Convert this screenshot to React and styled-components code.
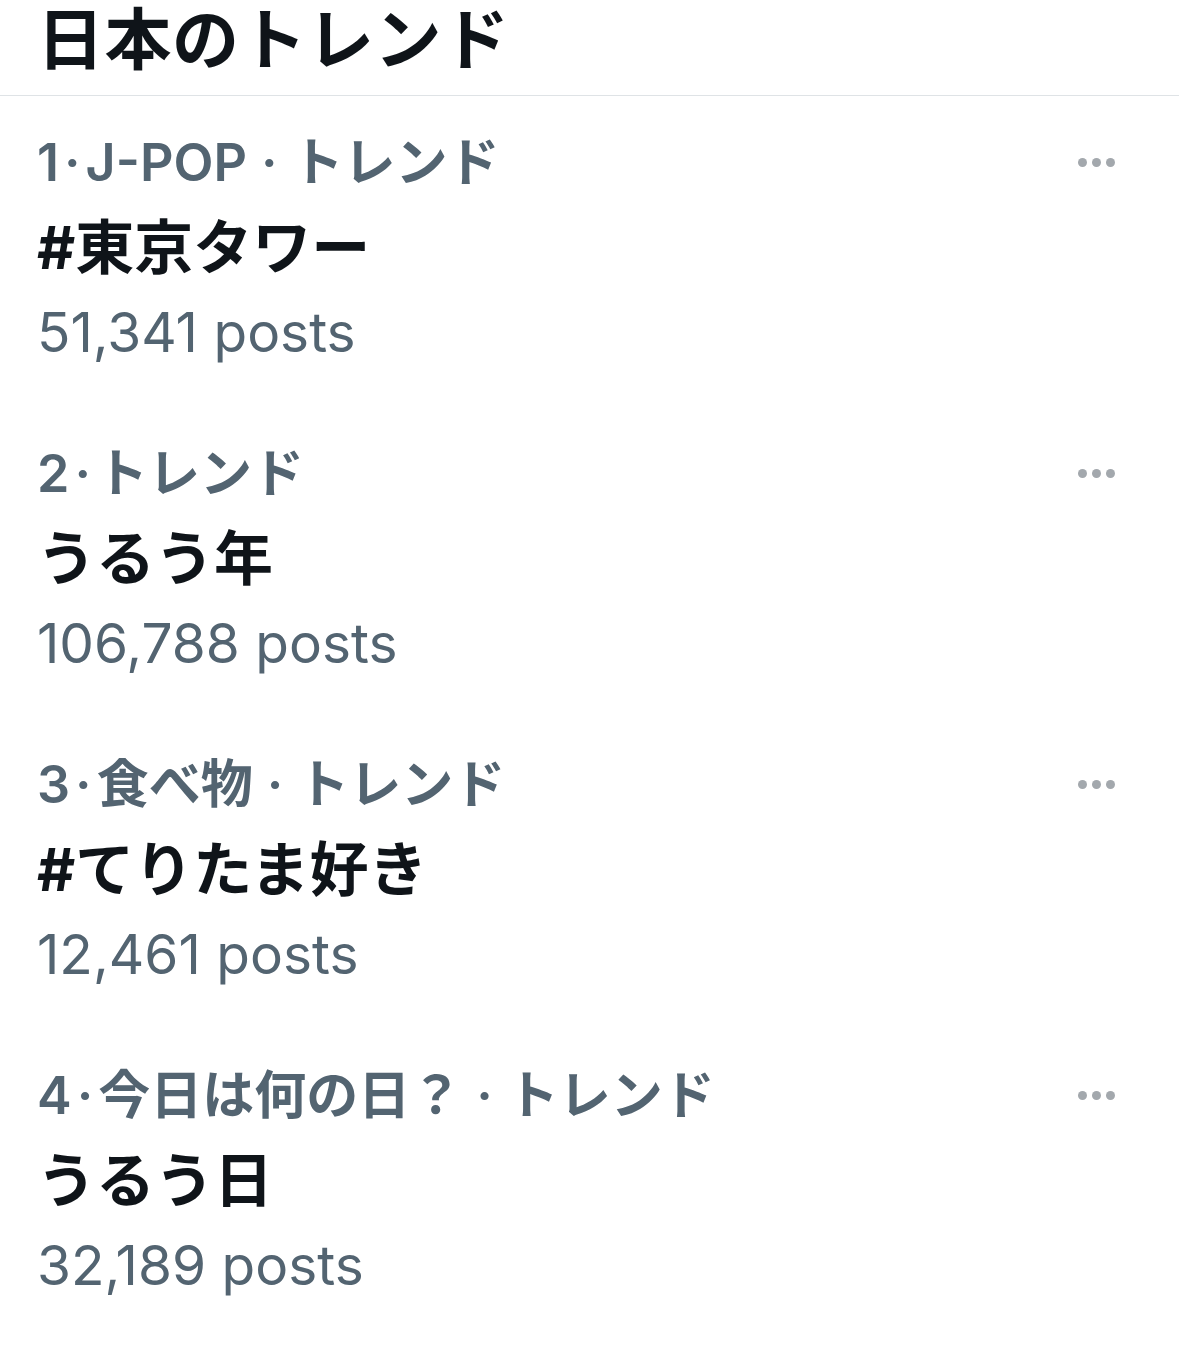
import React from 'react';
import styled, { createGlobalStyle } from 'styled-components';

//  ----------------------------------------------------------------------------
//  Styles
//  ----------------------------------------------------------------------------
const GlobalStyle = createGlobalStyle`
    html, body {
        margin: 0;
        padding: 0;
        background: #ffffff;
    }
    body {
        font-family: Inter, "Noto Sans CJK JP", sans-serif;
        -webkit-font-smoothing: antialiased;
    }
`;

const Page = styled.div`
    width: 1179px;
    min-height: 1360px;
    background: #ffffff;
    overflow: hidden;
`;

const Header = styled.header`
    height: 95px;
    border-bottom: 1px solid #dfe3e6;
    padding-left: 37px;
    display: flex;
    align-items: flex-start;
`;

const Heading = styled.h1`
    margin: 0;
    font-size: 67px;
    font-weight: 700;
    line-height: 80px;
    color: #0f1419;
    letter-spacing: 0.5px;
`;

const List = styled.ul`
    list-style: none;
    margin: 0;
    padding: 0;
`;

const Trend = styled.li`
    display: grid;
    grid-template-columns: 1fr auto;
    padding: 24px 64px 32px 37px;
`;

const Body = styled.div`
    display: flex;
    flex-direction: column;
`;

const Meta = styled.div`
    font-size: 52px;
    font-weight: 600;
    line-height: 85px;
    color: #536471;
    white-space: nowrap;
`;

const Dot = styled.span`
    margin: 0 ${({ $wide }) => ($wide ? '14px' : '5px')};
`;

const Name = styled.div`
    font-size: 59px;
    font-weight: 700;
    line-height: 85px;
    color: #0f1419;
    white-space: nowrap;
`;

const Count = styled.div`
    font-size: 55px;
    font-weight: 400;
    line-height: 85px;
    color: #536471;
    white-space: nowrap;
`;

const More = styled.button`
    align-self: start;
    height: 85px;
    display: flex;
    align-items: center;
    gap: 5px;
    padding: 0;
    border: none;
    background: transparent;
`;

const MoreDot = styled.span`
    width: 9px;
    height: 9px;
    border-radius: 50%;
    background: #a3a8ad;
`;


//  ----------------------------------------------------------------------------
//  Data
//  ----------------------------------------------------------------------------
const trends = [
    { rank: 1, category: 'J-POP', name: '#東京タワー', posts: '51,341' },
    { rank: 2, category: null, name: 'うるう年', posts: '106,788' },
    { rank: 3, category: '食べ物', name: '#てりたま好き', posts: '12,461' },
    { rank: 4, category: '今日は何の日？', name: 'うるう日', posts: '32,189' },
];


//  ----------------------------------------------------------------------------
//  Container
//  ----------------------------------------------------------------------------
const App = () => {
    return (
        <Page>
            <GlobalStyle />
            <Header>
                <Heading>日本のトレンド</Heading>
            </Header>
            <List>
                {trends.map((t) => (
                    <Trend key={t.rank}>
                        <Body>
                            <Meta>
                                {t.rank}
                                <Dot>·</Dot>
                                {t.category && (
                                    <>
                                        {t.category}
                                        <Dot $wide>·</Dot>
                                    </>
                                )}
                                トレンド
                            </Meta>
                            <Name>{t.name}</Name>
                            <Count>{t.posts} posts</Count>
                        </Body>
                        <More aria-label="more">
                            <MoreDot />
                            <MoreDot />
                            <MoreDot />
                        </More>
                    </Trend>
                ))}
            </List>
        </Page>
    );
};

export default App;
